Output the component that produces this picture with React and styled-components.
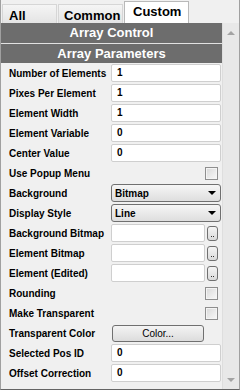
import React from "react";
import styled, { createGlobalStyle } from "styled-components";

const Global = createGlobalStyle`
  html, body { margin: 0; padding: 0; background: #f0f0f0; }
  body { font-family: "Liberation Sans", Arial, sans-serif; }
`;

const Window = styled.div`
  width: 240px;
  height: 390px;
  box-sizing: border-box;
  border-left: 1px solid #a0a0a0;
  border-right: 1px solid #a0a0a0;
  border-bottom: 1px solid #646464;
  background: #f0f0f0;
  display: flex;
  flex-direction: column;
  overflow: hidden;
  font-family: "Liberation Sans", Arial, sans-serif;
`;

const TabBar = styled.div`
  height: 23px;
  flex: none;
  display: flex;
  align-items: flex-end;
  gap: 1px;
  padding-left: 1px;
`;

const Tab = styled.div`
  box-sizing: border-box;
  width: ${(p) => p.$w}px;
  height: ${(p) => (p.$active ? 22 : 19)}px;
  padding-left: ${(p) => p.$pad}px;
  padding-top: ${(p) => (p.$active ? 1 : 2)}px;
  border: 1px solid ${(p) => (p.$active ? "#b9b9b9" : "#d6d6d6")};
  border-bottom: none;
  background: ${(p) =>
    p.$active ? "#ffffff" : "linear-gradient(#f5f5f5, #e4e4e4)"};
  font-size: 13px;
  font-weight: bold;
  line-height: 17px;
  color: #000;
  white-space: nowrap;
`;

const Body = styled.div`
  flex: 1;
  display: flex;
  min-height: 0;
`;

const Content = styled.div`
  width: 221px;
  flex: none;
  display: flex;
  flex-direction: column;
`;

const Header = styled.div`
  height: ${(p) => (p.$divider ? 19 : 20)}px;
  line-height: ${(p) => (p.$divider ? 19 : 20)}px;
  border-top: ${(p) => (p.$divider ? "1px solid #e2e2e2" : "none")};
  background: #6d6d6d;
  color: #fff;
  text-align: center;
  font-size: 13px;
  font-weight: bold;
`;

const Grid = styled.div`
  display: grid;
  grid-template-columns: 102px 110px;
  grid-auto-rows: 20px;
  align-items: center;
  padding-left: 8px;
`;

const Label = styled.div`
  font-size: 10px;
  font-weight: bold;
  color: #000;
  white-space: nowrap;
`;

const TextBox = styled.div`
  box-sizing: border-box;
  width: ${(p) => p.$w || 110}px;
  height: 18px;
  border: 1px solid #cfcfcf;
  border-radius: 2px;
  background: #fff;
  padding-left: 5px;
  font-size: 10px;
  font-weight: bold;
  line-height: 16px;
  color: #000;
`;

const Select = styled.div`
  box-sizing: border-box;
  width: 110px;
  height: 18px;
  border: 1px solid #707070;
  border-radius: 3px;
  background: linear-gradient(#f6f6f6, #dedede);
  padding: 0 4px 0 3px;
  display: flex;
  align-items: center;
  justify-content: space-between;
  font-size: 10px;
  font-weight: bold;
  color: #000;
`;

const Arrow = styled.span`
  width: 0;
  height: 0;
  border-left: 4px solid transparent;
  border-right: 4px solid transparent;
  border-top: 4px solid #000;
`;

const FileCell = styled.div`
  display: flex;
  align-items: center;
  gap: 2px;
`;

const DotsButton = styled.div`
  box-sizing: border-box;
  width: 11px;
  height: 15px;
  border: 1px solid #707070;
  border-radius: 3px;
  background: linear-gradient(#f4f4f4, #dadada);
  display: flex;
  align-items: flex-end;
  justify-content: center;
  gap: 1px;
  padding-bottom: 3px;
`;

const Dot = styled.span`
  width: 1px;
  height: 1px;
  background: #333;
`;

const Check = styled.div`
  justify-self: end;
  margin-right: 3px;
  box-sizing: border-box;
  width: 13px;
  height: 13px;
  border: 1px solid #8e8e8e;
  background: linear-gradient(135deg, #d8d8d8, #f8f8f8);
  box-shadow: inset 0 0 0 1px #f4f4f4;
`;

const PushButton = styled.div`
  box-sizing: border-box;
  margin-left: 1px;
  width: 92px;
  height: 17px;
  border: 1px solid #707070;
  border-radius: 3px;
  background: linear-gradient(#f4f4f4, #dcdcdc);
  font-size: 10px;
  line-height: 15px;
  text-align: center;
  color: #000;
`;

const Scrollbar = styled.div`
  flex: 1;
  background: #e8e8e8;
  border-left: 1px solid #dedede;
  display: flex;
  flex-direction: column;
  justify-content: space-between;
  align-items: center;
  padding: 8px 0 7px;
`;

const ScrollArrow = styled.span`
  width: 0;
  height: 0;
  border-left: 4px solid transparent;
  border-right: 4px solid transparent;
  ${(p) =>
    p.$up
      ? "border-bottom: 4px solid #a3a3a3;"
      : "border-top: 4px solid #a3a3a3;"}
`;

const rows = [
  { label: "Number of Elements", kind: "text", value: "1" },
  { label: "Pixes Per Element", kind: "text", value: "1" },
  { label: "Element Width", kind: "text", value: "1" },
  { label: "Element Variable", kind: "text", value: "0" },
  { label: "Center Value", kind: "text", value: "0" },
  { label: "Use Popup Menu", kind: "check" },
  { label: "Background", kind: "select", value: "Bitmap" },
  { label: "Display Style", kind: "select", value: "Line" },
  { label: "Background Bitmap", kind: "file" },
  { label: "Element Bitmap", kind: "file" },
  { label: "Element (Edited)", kind: "file" },
  { label: "Rounding", kind: "check" },
  { label: "Make Transparent", kind: "check" },
  { label: "Transparent Color", kind: "button", value: "Color..." },
  { label: "Selected Pos ID", kind: "text", value: "0" },
  { label: "Offset Correction", kind: "text", value: "0" },
];

function Field({ row }) {
  switch (row.kind) {
    case "text":
      return <TextBox>{row.value}</TextBox>;
    case "check":
      return <Check />;
    case "select":
      return (
        <Select>
          <span>{row.value}</span>
          <Arrow />
        </Select>
      );
    case "file":
      return (
        <FileCell>
          <TextBox $w={94} />
          <DotsButton>
            <Dot />
            <Dot />
          </DotsButton>
        </FileCell>
      );
    case "button":
      return <PushButton>{row.value}</PushButton>;
    default:
      return null;
  }
}

export default function App() {
  return (
    <>
      <Global />
      <Window>
        <TabBar>
          <Tab $w={55} $pad={6}>All</Tab>
          <Tab $w={65} $pad={5}>Common</Tab>
          <Tab $w={65} $pad={8} $active>
            Custom
          </Tab>
        </TabBar>
        <Body>
          <Content>
            <Header>Array Control</Header>
            <Header $divider>Array Parameters</Header>
            <Grid>
              {rows.map((r) => (
                <React.Fragment key={r.label}>
                  <Label>{r.label}</Label>
                  <Field row={r} />
                </React.Fragment>
              ))}
            </Grid>
          </Content>
          <Scrollbar>
            <ScrollArrow $up />
            <ScrollArrow />
          </Scrollbar>
        </Body>
      </Window>
    </>
  );
}
